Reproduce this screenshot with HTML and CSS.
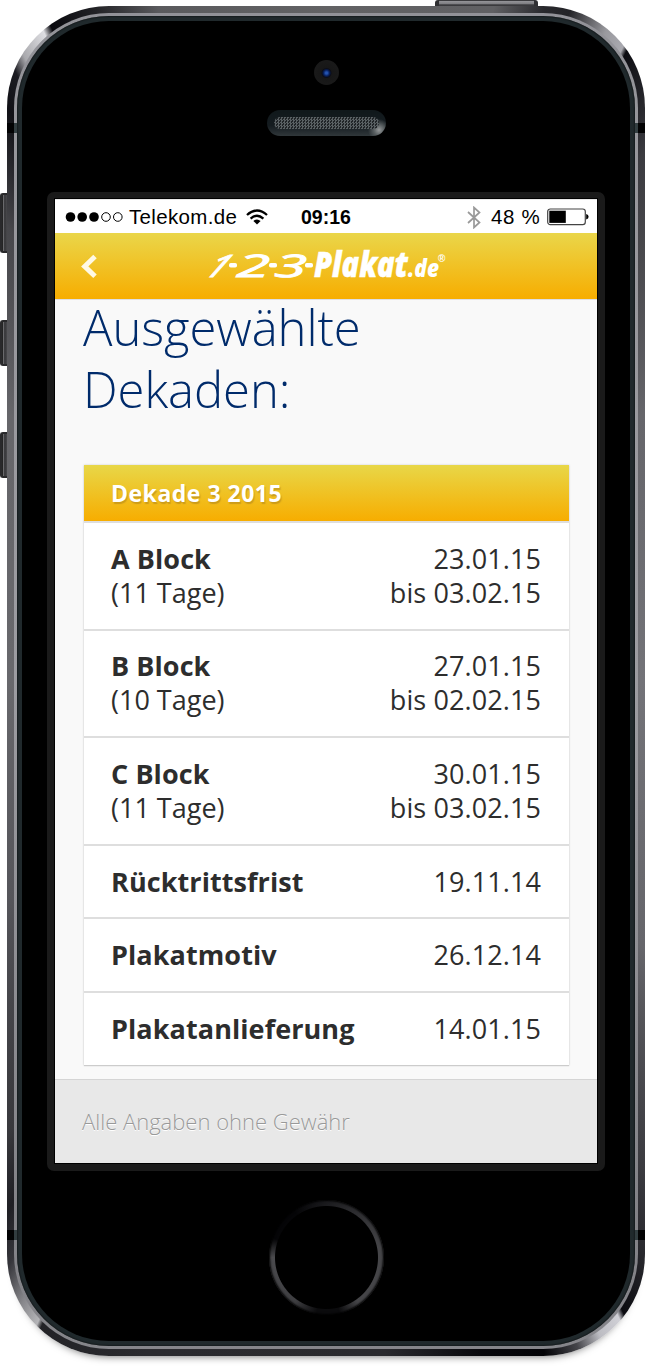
FILE: index.html
```
<!DOCTYPE html>
<html lang="de">
<head>
<meta charset="utf-8">
<title>1-2-3-Plakat.de</title>
<link rel="stylesheet" href="styles.css">
</head>
<body>
<div class="phone">
  <span class="key power"></span>
  <span class="key mute"></span>
  <span class="key vol-up"></span>
  <span class="key vol-down"></span>
  <div class="metal">
    <i class="seam seam-tl"></i><i class="seam seam-tr"></i><i class="seam seam-bl"></i><i class="seam seam-br"></i>
    <div class="rim">
      <div class="edge">
        <div class="face">
          <div class="camera"></div>
          <div class="speaker"><div class="mesh"></div></div>
          <div class="bezel">
            <main class="screen">
              <div class="status">
                <svg class="signal" width="60" height="12" viewBox="0 0 60 12"><circle cx="5.5" cy="6" r="4.8"/><circle cx="17.2" cy="6" r="4.8"/><circle cx="29" cy="6" r="4.8"/><g fill="none" stroke="#000" stroke-width="1"><circle cx="41" cy="6" r="4.3"/><circle cx="52.8" cy="6" r="4.3"/></g></svg>
                <span class="carrier">Telekom.de</span>
                <svg class="wifi" width="22" height="16" viewBox="0 0 22 16"><g fill="none" stroke="#000" stroke-width="2.3"><path d="M1 6Q11-3 21 6"/><path d="M4.6 9.6Q11 3.8 17.4 9.6"/></g><path d="M7.4 12Q11 8.8 14.6 12L11 15.5Z"/></svg>
                <span class="time">09:16</span>
                <svg class="bt" width="14" height="23" viewBox="0 0 14 23"><path d="M1 6L12.5 16.5L7 21.5V1.5L12.5 6.5L1 17" fill="none" stroke="#999" stroke-width="1.7"/></svg>
                <span class="percent">48 %</span>
                <svg class="battery" width="42" height="18" viewBox="0 0 42 18"><rect x=".7" y="1" width="37.6" height="15.6" rx="2.6" fill="#fff" stroke="#444" stroke-width="1.2"/><path d="M2.3 2.7h16.5v12.2h-16.5z"/><path d="M39.2 6q2.4.5 2.4 2.8t-2.4 2.8z"/></svg>
              </div>
              <header class="topbar">
                <svg class="back" width="17" height="25" viewBox="0 0 17 25"><path d="M14 2.5L3.7 12.4L14 22.3" fill="none" stroke="#fff9e5" stroke-width="5"/></svg>
                <svg class="logo" width="242" height="40" viewBox="0 0 242 40" fill="#fff">
                  <g class="script">
                    <text transform="translate(-5 29.5) skewX(-32)" textLength="21" lengthAdjust="spacingAndGlyphs">1</text>
                    <text transform="translate(29 30) skewX(-4)" textLength="33" lengthAdjust="spacingAndGlyphs">2</text>
                    <text transform="translate(67 30) skewX(-4)" textLength="32" lengthAdjust="spacingAndGlyphs">3</text>
                  </g>
                  <rect x="22" y="16" width="8" height="4.6" rx="1.8"/><rect x="62" y="16" width="8" height="4.6" rx="1.8"/><rect x="98" y="16" width="8" height="4.6" rx="1.8"/>
                  <text class="name" x="107" y="29.500" textLength="94" lengthAdjust="spacingAndGlyphs">Plakat</text>
                  <text class="tld" x="201" y="29.500" textLength="31" lengthAdjust="spacingAndGlyphs">.de</text>
                  <text class="reg" x="231" y="15">®</text>
                </svg>
              </header>
              <section class="content">
                <h1>Ausgewählte<br>Dekaden:</h1>
                <div class="card">
                  <h2>Dekade 3 2015</h2>
                  <div class="row tall"><div><b>A Block</b><br>(11 Tage)</div><div class="date">23.01.15<br>bis 03.02.15</div></div>
                  <div class="row tall"><div><b>B Block</b><br>(10 Tage)</div><div class="date">27.01.15<br>bis 02.02.15</div></div>
                  <div class="row tall"><div><b>C Block</b><br>(11 Tage)</div><div class="date">30.01.15<br>bis 03.02.15</div></div>
                  <div class="row"><b>Rücktrittsfrist</b><div class="date">19.11.14</div></div>
                  <div class="row"><b>Plakatmotiv</b><div class="date">26.12.14</div></div>
                  <div class="row"><b>Plakatanlieferung</b><div class="date">14.01.15</div></div>
                </div>
              </section>
              <footer>Alle Angaben ohne Gewähr</footer>
            </main>
          </div>
          <div class="home"></div>
        </div>
      </div>
    </div>
  </div>
</div>
</body>
</html>
```

FILE: styles.css
```
* { box-sizing: border-box; }
body { margin: 0; background: #fff; width: 645px; height: 1366px; overflow: hidden; }
.phone { position: relative; padding: 6px 0 0 7px; height: 1366px; }

/* Metal housing */
.metal {
  position: relative; width: 638px; height: 1350px; padding: 7px; border-radius: 102px;
  background: conic-gradient(#626264 0deg, #606063 14deg, #29292d 18deg, #232327 20deg, #99999e 23.3deg, #aaaab0 25.1deg, #0d0d12 25.5deg, #29292e 29deg, #3b3b40 31deg, #4a4a4e 37deg, #66666b 50deg, #737378 90deg, #66666b 130deg, #3b3b40 147deg, #29292e 151deg, #0b0b10 154.8deg, #d0d0d6 155.3deg, #bcbcc2 157.3deg, #45454a 159.3deg, #020206 162deg, #08080c 167deg, #2a2a2e 175deg, #2b2b2f 195deg, #222226 203.8deg, #b5b5b8 204.2deg, #88888c 206deg, #35353a 208.5deg, #1f1f24 211deg, #38383c 215deg, #55555a 235deg, #68686c 270deg, #66666a 310deg, #47474b 325deg, #111116 331deg, #1c1c22 333deg, #a9a9ad 334.2deg, #dedee2 336.5deg, #08080d 337.2deg, #222226 341deg, #5a5a5d 346deg, #626264 360deg);
  box-shadow: 0 9px 9px -9px #0009;
}
.rim { height: 100%; padding: 3px; border-radius: 95px; background: linear-gradient(#929298, #96969b 10%, #9c9ca1 50%, #828287 90%, #85858a); }
.edge { height: 100%; padding: 5px; border-radius: 92px; background: #20292c; box-shadow: inset 0 0 2px #000; }
.face { height: 100%; border-radius: 87px; background: #000; display: flex; flex-direction: column; align-items: center; padding-top: 39px; }
.seam { position: absolute; width: 10px; height: 10px; background: linear-gradient(90deg, #020203 70%, #323d40 70%); }
.seam-tl { left: 0; top: 117px; }
.seam-tr { right: 0; top: 117px; transform: scaleX(-1); }
.seam-bl { left: 0; top: 1224px; }
.seam-br { right: 0; top: 1224px; transform: scaleX(-1); }
.key { position: absolute; left: 0; width: 8px; background: linear-gradient(90deg, #222 8%, #77777a 20%, #333336 45%, #49494c 80%, #222); border: 2px solid #29292b; border-right: 0; border-radius: 3px 0 0 3px; }
.mute { top: 193px; height: 60px; }
.vol-up { top: 320px; height: 46px; }
.vol-down { top: 432px; height: 46px; }
.power { left: 435px; top: 0; width: 103px; height: 8px; border: 2px solid #303033; border-width: 0 4px 1px; border-radius: 3px 3px 0 0; background: linear-gradient(#3b3b3e 10%, #929296 20%, #808084 50%, #3a3a3d 70%); }

/* Front details */
.camera { width: 25px; height: 25px; border-radius: 50%; background: radial-gradient(circle at 50% 52%, #2453b0 0 1px, #071f5c 3px, #0b0d18 4.5px, #171717 5.5px, #1c1c1c); }
.speaker { width: 119px; height: 26px; margin-top: 25px; padding: 7px; border-radius: 13px; background: radial-gradient(circle at 112px 20px, #96999a 0, #5a6062 5px, transparent 11px), linear-gradient(#10181b, #151c20 60%, #30373a); }
.mesh { height: 12px; width: 105px; border-radius: 6px; background: conic-gradient(#596063 25%, #202427 0 50%, #596063 0 75%, #202427 0) 0 0 / 3px 3px; }
.home { width: 115px; height: 115px; margin-top: 29px; border-radius: 50%; background: radial-gradient(circle, #000 0 51px, transparent 52px), conic-gradient(#1b1b1e 0deg, #29292c 25deg, #454548 80deg, #454548 145deg, #0b0b0d 167deg, #0b0b0d 190deg, #3e3e41 215deg, #4a4a4d 270deg, #050507 290deg, #050507 325deg, #1b1b1e 360deg); box-shadow: inset 0 0 2px 1px #000; }
.bezel { width: 558px; height: 979px; margin-top: 56px; padding: 7px 8px 8px; border-radius: 7px; background: #1a1a1a; flex-shrink: 0; }
.screen { width: 542px; height: 964px; display: flex; flex-direction: column; background: #f9f9f9; outline: 1px solid #000; overflow: hidden; font-family: "Open Sans", sans-serif; color: #2d2d2d; }

/* Status bar */
.status { height: 34px; flex: none; display: flex; align-items: center; background: #fff; padding: 1px 8px 0 10px; font: 20.5px/34px "Liberation Sans", sans-serif; color: #000; border-top: 1px solid #e8e8e8; }
.carrier { margin-left: 4px; letter-spacing: .35px; width: 108px; white-space: nowrap; }
.wifi { margin-left: 9px; }
.time { margin-left: 33px; width: 50px; font-weight: bold; font-size: 19.5px; }
.bt { margin-left: 116px; }
.percent { margin-left: 10px; width: 50px; letter-spacing: .7px; white-space: nowrap; }
.battery { margin-left: 6px; }

/* App bar */
.topbar { height: 67px; flex: none; display: flex; align-items: center; padding-left: 26px; background: linear-gradient(#ead64a, #f7ad00); border-bottom: 1px solid #dedfe5; }
.logo { margin: 1px 0 0 109px; overflow: visible; }
.script { font: italic 31px "Open Sans"; stroke: #fff; stroke-width: .9px; }
.name { font: italic 800 35px "Open Sans"; stroke: #fff; stroke-width: .5px; }
.tld { font: italic 800 24px "Open Sans"; }
.reg { font: bold 10px "Liberation Sans"; }

/* Content */
.content { padding: 0 28px 0 29px; height: 779px; flex: none; }
h1 { margin: -4px 0 0 -1px; font-size: 49px; line-height: 62px; letter-spacing: -.05px; font-weight: 300; color: #002b6b; }
.card { width: 485px; margin-top: 45px; background: #fff; box-shadow: 0 0 2px #ccc, 0 1px 1px #ccc; }
h2 { margin: 0; height: 56px; padding: 0 27px; font-size: 23px; line-height: 57px; letter-spacing: .5px; font-weight: 700; color: #fff; text-shadow: 1px 2px 1px #a87e1b80; background: linear-gradient(#e8d748, #f7ad00); }
.row { height: 73.6px; padding: 0 28px 0 27px; display: flex; justify-content: space-between; align-items: center; border-top: 2px solid #dedede; font-size: 27px; line-height: 34px; }
.row b { letter-spacing: .08px; }
.tall { height: 107.6px; }
.date { text-align: right; letter-spacing: .1px; }
footer { flex: 1; border-top: 1px solid #d5d5d5; background: #e8e8e8; padding: 0 27px; font-size: 22px; line-height: 83px; font-weight: 300; color: #999; text-shadow: 0 1px #fff; }
```
